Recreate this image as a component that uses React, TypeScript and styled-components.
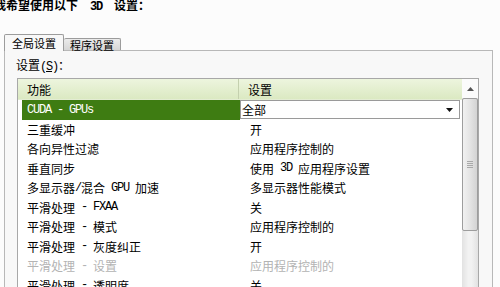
import React from "react";
import styled, { createGlobalStyle } from "styled-components";

const Global = createGlobalStyle`
  html, body { margin: 0; padding: 0; background: #fcfcfc; }
  body { font-family: "Noto Sans CJK SC", "Noto Sans", sans-serif; color: #000; }
`;

const Page = styled.div`
  width: 500px;
  height: 287px;
  overflow: hidden;
  background: #fcfcfc;
  display: flex;
  flex-direction: column;
`;

const Title = styled.div`
  height: 12px;
  margin: -1px 0 0 -6px;
  font-size: 12px;
  line-height: 12px;
  font-weight: bold;
  white-space: pre;
`;

const Latin = styled.span<{ $bold?: boolean }>`
  font-family: "Liberation Mono", "DejaVu Sans Mono", monospace;
  font-size: 12px;
  letter-spacing: -1.2px;
  font-weight: ${(p) => (p.$bold ? "bold" : "normal")};
`;

const TabStrip = styled.div`
  display: flex;
  align-items: flex-end;
  height: 17px;
  margin: 23px 0 -1px 4px;
  position: relative;
  z-index: 1;
`;

const Tab = styled.div<{ $active?: boolean }>`
  box-sizing: border-box;
  display: flex;
  align-items: center;
  justify-content: center;
  font-size: 11px;
  line-height: 11px;
  border: 1px solid #9c9c9c;
  border-bottom: none;
  border-left: ${(p) => (p.$active ? "1px solid #9c9c9c" : "none")};
  border-radius: 2px 2px 0 0;
  width: ${(p) => (p.$active ? "60px" : "57px")};
  height: ${(p) => (p.$active ? "17px" : "12px")};
  margin-bottom: ${(p) => (p.$active ? "0" : "1px")};
  padding-top: ${(p) => (p.$active ? "0" : "1px")};
  background: ${(p) =>
    p.$active ? "#f8f8f8" : "linear-gradient(#ebebeb, #d6d6d6)"};
`;

const Panel = styled.div`
  box-sizing: border-box;
  flex: 1;
  width: 489px;
  margin-left: 4px;
  border: 1px solid #b8b8b8;
  background: #f8f8f8;
  padding: 7px 0 0 12px;
  display: flex;
  flex-direction: column;
`;

const Label = styled.div`
  height: 14px;
  margin-left: -1px;
  font-size: 12px;
  line-height: 14px;
  white-space: pre;
`;

const ListBox = styled.div`
  box-sizing: border-box;
  width: 462px;
  flex: 1;
  margin-top: 6px;
  border: 1px solid #a8a8a8;
  border-bottom: none;
  background: #fff;
  display: flex;
`;

const ListMain = styled.div`
  flex: 1;
  display: flex;
  flex-direction: column;
`;

const Header = styled.div`
  height: 21px;
  display: grid;
  grid-template-columns: 221px 1fr;
  background: linear-gradient(#edf5de, #dbe9c2);
  border-bottom: 1px solid #e3ecd3;
  box-sizing: border-box;
`;

const HeaderCell = styled.div<{ $sep?: boolean }>`
  display: flex;
  align-items: center;
  padding-left: ${(p) => (p.$sep ? "9px" : "9px")};
  font-size: 12px;
  border-right: ${(p) => (p.$sep ? "1px solid #c4d0ae" : "none")};
`;

const Rows = styled.div`
  padding-left: 4px;
  display: flex;
  flex-direction: column;
`;

const Row = styled.div<{ $disabled?: boolean }>`
  height: 19.5px;
  display: grid;
  grid-template-columns: 218px 1fr;
  font-size: 12px;
  color: ${(p) => (p.$disabled ? "#b3b3b3" : "#000")};
  white-space: pre;
`;

const Cell = styled.div<{ $selected?: boolean; $value?: boolean }>`
  display: flex;
  align-items: center;
  padding-left: ${(p) => (p.$value ? "10px" : "5px")};
  background: ${(p) => (p.$selected ? "#3e7c12" : "transparent")};
  color: ${(p) => (p.$selected ? "#fff" : "inherit")};
`;

const DropCell = styled.div`
  display: flex;
  align-items: stretch;
`;

const Dropdown = styled.div`
  box-sizing: border-box;
  width: 220px;
  height: 19px;
  border: 1px solid #9a9a9a;
  background: #fff;
  display: flex;
  align-items: center;
  justify-content: space-between;
  padding: 0 6px 0 1px;
`;

const Scrollbar = styled.div`
  width: 16px;
  display: flex;
  flex-direction: column;
  background: linear-gradient(to right, #e2e2e2, #f2f2f2 40%, #f2f2f2 60%, #e2e2e2);
`;

const ArrowButton = styled.div`
  height: 19px;
  display: flex;
  align-items: center;
  justify-content: center;
  background: #fbfbfb;
`;

const Thumb = styled.div`
  box-sizing: border-box;
  height: 133px;
  border: 1px solid #9d9d9d;
  border-radius: 2px;
  background: linear-gradient(to right, #f1f1f1, #e4e4e4 50%, #d3d3d3);
  display: flex;
  align-items: center;
  justify-content: center;
`;

const Grip = styled.div`
  width: 6px;
  display: flex;
  flex-direction: column;
  gap: 1px;
`;

const GripLine = styled.div`
  height: 1px;
  background: #a9a9a9;
`;

type RowData = { name: string; value: string; disabled?: boolean };

const rows: RowData[] = [
  { name: "三重缓冲", value: "开" },
  { name: "各向异性过滤", value: "应用程序控制的" },
  { name: "垂直同步", value: "使用 3D 应用程序设置" },
  { name: "多显示器/混合 GPU 加速", value: "多显示器性能模式" },
  { name: "平滑处理 - FXAA", value: "关" },
  { name: "平滑处理 - 模式", value: "应用程序控制的" },
  { name: "平滑处理 - 灰度纠正", value: "开" },
  { name: "平滑处理 - 设置", value: "应用程序控制的", disabled: true },
  { name: "平滑处理 - 透明度", value: "关" },
];

const mixed = (s: string, bold?: boolean) =>
  s.split(/([\x20-\x7e]+)/).map((part, i) =>
    /[\x20-\x7e]/.test(part) ? (
      <Latin key={i} $bold={bold}>
        {part}
      </Latin>
    ) : (
      <React.Fragment key={i}>{part}</React.Fragment>
    )
  );

export default function App() {
  return (
    <>
      <Global />
      <Page>
        <Title>{mixed("我希望使用以下  3D  设置：", true)}</Title>
        <TabStrip>
          <Tab $active>全局设置</Tab>
          <Tab>程序设置</Tab>
        </TabStrip>
        <Panel>
          <Label>
            设置<Latin>(<u>S</u>)</Latin>：
          </Label>
          <ListBox>
            <ListMain>
              <Header>
                <HeaderCell $sep>功能</HeaderCell>
                <HeaderCell>设置</HeaderCell>
              </Header>
              <Rows>
                <Row>
                  <Cell $selected>{mixed("CUDA - GPUs")}</Cell>
                  <DropCell>
                    <Dropdown>
                      <span>全部</span>
                      <svg width="7" height="4" viewBox="0 0 7 4">
                        <path d="M0 0H7L3.5 4Z" fill="#111" />
                      </svg>
                    </Dropdown>
                  </DropCell>
                </Row>
                {rows.map((r) => (
                  <Row key={r.name} $disabled={r.disabled}>
                    <Cell>{mixed(r.name)}</Cell>
                    <Cell $value>{mixed(r.value)}</Cell>
                  </Row>
                ))}
              </Rows>
            </ListMain>
            <Scrollbar>
              <ArrowButton>
                <svg width="7" height="4" viewBox="0 0 7 4">
                  <path d="M0 4H7L3.5 0Z" fill="#555" />
                </svg>
              </ArrowButton>
              <Thumb>
                <Grip>
                  <GripLine />
                  <GripLine />
                  <GripLine />
                  <GripLine />
                </Grip>
              </Thumb>
            </Scrollbar>
          </ListBox>
        </Panel>
      </Page>
    </>
  );
}
